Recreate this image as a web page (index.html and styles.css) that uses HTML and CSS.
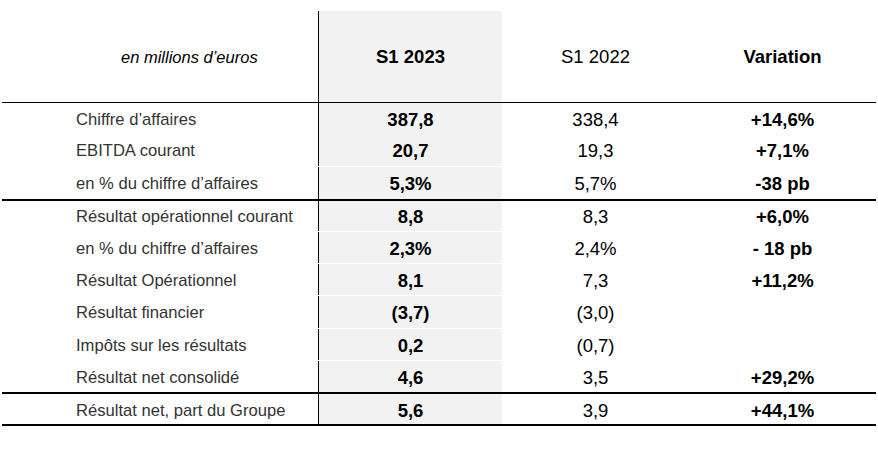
FILE: index.html
```html
<!DOCTYPE html>
<html lang="fr">
<head>
<meta charset="utf-8">
<title>Résultats S1 2023</title>
<link rel="stylesheet" href="styles.css">
</head>
<body>
<div class="fin-table">
  <div class="row head">
    <div class="cell unit">en millions d’euros</div>
    <div class="cell cur">S1 2023</div>
    <div class="cell prev">S1 2022</div>
    <div class="cell var">Variation</div>
  </div>
  <div class="row first">
    <div class="cell label">Chiffre d’affaires</div>
    <div class="cell cur">387,8</div>
    <div class="cell prev">338,4</div>
    <div class="cell var">+14,6%</div>
  </div>
  <div class="row">
    <div class="cell label">EBITDA courant</div>
    <div class="cell cur">20,7</div>
    <div class="cell prev">19,3</div>
    <div class="cell var">+7,1%</div>
  </div>
  <div class="row sep">
    <div class="cell label">en % du chiffre d’affaires</div>
    <div class="cell cur">5,3%</div>
    <div class="cell prev">5,7%</div>
    <div class="cell var">-38 pb</div>
  </div>
  <div class="row rule">
    <div class="cell label">Résultat opérationnel courant</div>
    <div class="cell cur">8,8</div>
    <div class="cell prev">8,3</div>
    <div class="cell var">+6,0%</div>
  </div>
  <div class="row sep">
    <div class="cell label">en % du chiffre d’affaires</div>
    <div class="cell cur">2,3%</div>
    <div class="cell prev">2,4%</div>
    <div class="cell var">- 18 pb</div>
  </div>
  <div class="row sep">
    <div class="cell label">Résultat Opérationnel</div>
    <div class="cell cur">8,1</div>
    <div class="cell prev">7,3</div>
    <div class="cell var">+11,2%</div>
  </div>
  <div class="row sep">
    <div class="cell label">Résultat financier</div>
    <div class="cell cur">(3,7)</div>
    <div class="cell prev">(3,0)</div>
    <div class="cell var"></div>
  </div>
  <div class="row sep">
    <div class="cell label">Impôts sur les résultats</div>
    <div class="cell cur">0,2</div>
    <div class="cell prev">(0,7)</div>
    <div class="cell var"></div>
  </div>
  <div class="row sep">
    <div class="cell label">Résultat net consolidé</div>
    <div class="cell cur">4,6</div>
    <div class="cell prev">3,5</div>
    <div class="cell var">+29,2%</div>
  </div>
  <div class="row rule last">
    <div class="cell label">Résultat net, part du Groupe</div>
    <div class="cell cur">5,6</div>
    <div class="cell prev">3,9</div>
    <div class="cell var">+44,1%</div>
  </div>
</div>
</body>
</html>
```

FILE: styles.css
```css
html, body {
  margin: 0;
  padding: 0;
  background: #ffffff;
}

body {
  font-family: "Liberation Sans", Arial, sans-serif;
  color: #000000;
}

.fin-table {
  width: 874px;
  margin: 11px 2px 0 2px;
}

.row {
  display: grid;
  grid-template-columns: 316px 184px 187px 187px;
  height: 32.3px;
  box-sizing: border-box;
}

.row.head {
  height: 92px;
  border-bottom: 1px solid #000000;
}

.row.first {
  height: 31px;
}

.row.sep {
  border-top: 1px solid #ffffff;
}

.row.rule {
  border-top: 2px solid #000000;
}

.row.last {
  height: 34px;
  border-bottom: 2px solid #000000;
}

.cell {
  display: flex;
  align-items: center;
  justify-content: center;
  box-sizing: border-box;
  padding-top: 3px;
  font-size: 18.5px;
  line-height: 1;
  white-space: nowrap;
}

.head .cell {
  padding-top: 2px;
}

.label {
  justify-content: flex-start;
  padding-left: 74px;
  font-size: 16.6px;
  color: #333333;
}

.unit {
  justify-content: flex-start;
  padding-left: 119px;
  font-size: 16.5px;
  font-style: italic;
}

.cur {
  background: #f2f2f2;
  border-left: 1px solid #000000;
  font-weight: bold;
}

.var {
  font-weight: bold;
}
```
